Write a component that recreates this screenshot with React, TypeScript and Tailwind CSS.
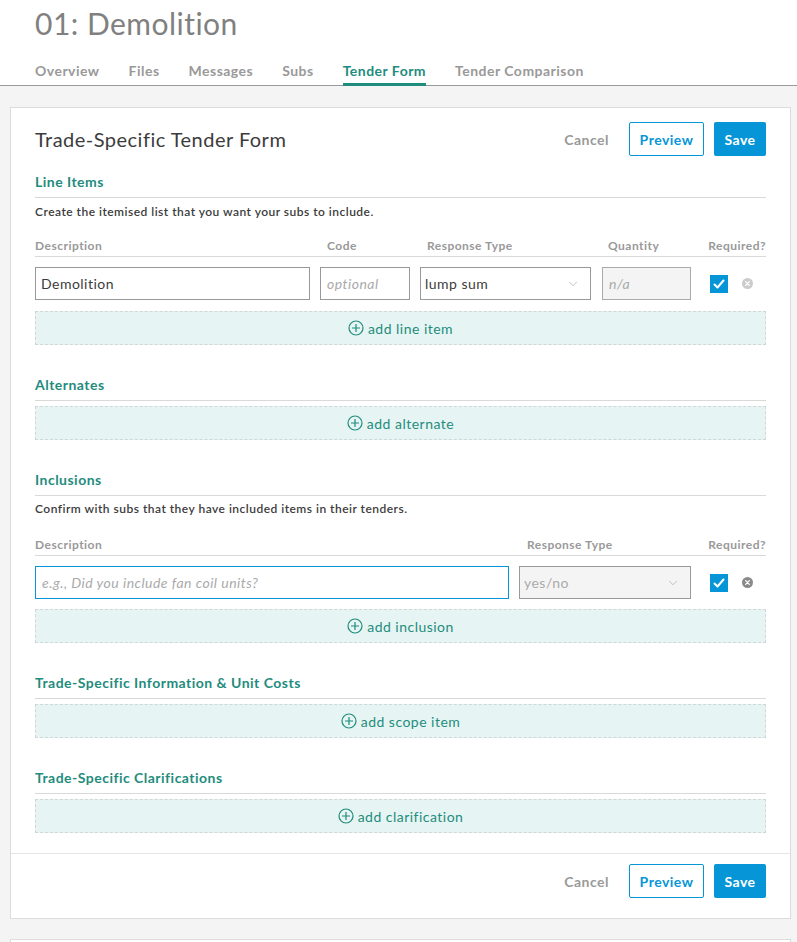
import { ChevronDown } from 'lucide-react'

const font = { fontFamily: 'Lato, "Noto Sans", sans-serif' }

function PlusCircle() {
  return (
    <svg width="16" height="16" viewBox="0 0 16 16" fill="none" stroke="currentColor" strokeWidth="1.2" aria-hidden="true">
      <circle cx="8" cy="8" r="7" />
      <path d="M8 4v8 M4 8h8" />
    </svg>
  )
}

function Checkbox() {
  return (
    <span className="flex h-[18px] w-[18px] items-center justify-center bg-[#0696d7]">
      <svg width="12" height="12" viewBox="0 0 12 12" fill="none" stroke="white" strokeWidth="2" strokeLinecap="round" strokeLinejoin="round" aria-hidden="true">
        <path d="M1.5 6.5l3 3 6-7" />
      </svg>
    </span>
  )
}

function RemoveIcon({ dark }: { dark?: boolean }) {
  return (
    <svg width="11" height="11" viewBox="0 0 12 12" aria-hidden="true">
      <circle cx="6" cy="6" r="6" fill={dark ? '#8a8a8a' : '#cccccc'} />
      <path d="M4 4l4 4 M8 4l-4 4" stroke="white" strokeWidth="1.4" strokeLinecap="round" />
    </svg>
  )
}

function AddButton({ label }: { label: string }) {
  return (
    <button className="flex h-[34px] w-full items-center justify-center gap-1 border border-dashed border-[#cfd8d6] bg-[#e6f5f3] text-[14px] text-[#1f8c7d]">
      <PlusCircle />
      <span>{label}</span>
    </button>
  )
}

function SectionHeading({ title }: { title: string }) {
  return (
    <h3 className="border-b border-[#d9d9d9] pb-[6px] text-[14px] font-bold leading-[18px] text-[#1f8c7d]">
      {title}
    </h3>
  )
}

function Actions() {
  return (
    <div className="flex items-center">
      <button className="mr-5 text-[14px] font-bold text-[#999]">Cancel</button>
      <button className="h-[34px] w-[75px] rounded-[2px] border border-[#0696d7] bg-white text-[14px] font-bold text-[#0696d7]">
        Preview
      </button>
      <button className="ml-[10px] h-[34px] w-[52px] rounded-[2px] bg-[#0696d7] text-[14px] font-bold text-white">
        Save
      </button>
    </div>
  )
}

const tabs = ['Overview', 'Files', 'Messages', 'Subs', 'Tender Form', 'Tender Comparison']

export default function App() {
  return (
    <div className="min-h-[942px] bg-[#f4f4f4] tracking-[0.03em] text-[#3c3c3c]" style={font}>
      <header className="border-b border-[#999] bg-white px-[35px]">
        <h1 className="pt-[5px] text-[30px] leading-[36px] text-[#808080]">01: Demolition</h1>
        <nav className="-mb-px mt-[20px] flex gap-[29px]">
          {tabs.map((t) => (
            <span
              key={t}
              className={[
                'pb-[2px] text-[14px] font-bold leading-[20px]',
                t === 'Tender Form' ? 'border-b-[3px] border-[#1f8c7d] text-[#1f8c7d]' : 'border-b-[3px] border-transparent text-[#999]',
              ].join(' ')}
            >
              {t}
            </span>
          ))}
        </nav>
      </header>

      <main className="pl-[10px] pr-[6px] pt-[21px]">
        <section className="border border-[#dcdcdc] bg-white">
          <div className="px-[24px] pt-[14px]">
            <div className="flex items-center justify-between">
              <h2 className="text-[20px] leading-[28px] text-[#3c3c3c]">Trade-Specific Tender Form</h2>
              <Actions />
            </div>

            <div className="mt-[17px]">
              <SectionHeading title="Line Items" />
              <p className="mt-[6px] text-[12px] font-semibold leading-[16px] text-[#3c3c3c]">
                Create the itemised list that you want your subs to include.
              </p>
              <div className="mt-[18px] grid grid-cols-[275px_90px_171px_90px_1fr] gap-x-[10px] border-b border-[#d9d9d9] pb-[2px] text-[12px] font-bold leading-[16px] text-[#999]">
                <span>Description</span>
                <span className="pl-[7px]">Code</span>
                <span className="pl-[7px]">Response Type</span>
                <span className="pl-[7px]">Quantity</span>
                <span className="text-right">Required?</span>
              </div>
              <div className="mt-[10px] grid grid-cols-[275px_90px_171px_90px_1fr] items-center gap-x-[10px]">
                <div className="flex h-[33px] items-center border border-[#999] px-[5px] text-[14px]">Demolition</div>
                <div className="flex h-[33px] items-center border border-[#999] px-[6px] text-[14px] italic text-[#aaa]">optional</div>
                <div className="flex h-[33px] items-center justify-between border border-[#999] pl-[4px] pr-[10px] text-[14px]">
                  <span>lump sum</span>
                  <ChevronDown size={14} strokeWidth={1} color="#999" />
                </div>
                <div className="ml-[1px] flex h-[33px] items-center border border-[#aaa] bg-[#f4f4f4] px-[6px] text-[14px] italic text-[#aaa]">n/a</div>
                <div className="flex items-center gap-[14px] pl-[9px]">
                  <Checkbox />
                  <RemoveIcon />
                </div>
              </div>
              <div className="mt-[11px]">
                <AddButton label="add line item" />
              </div>
            </div>

            <div className="mt-[31px]">
              <SectionHeading title="Alternates" />
              <div className="mt-[5px]">
                <AddButton label="add alternate" />
              </div>
            </div>

            <div className="mt-[31px]">
              <SectionHeading title="Inclusions" />
              <p className="mt-[5px] text-[12px] font-semibold leading-[16px] text-[#3c3c3c]">
                Confirm with subs that they have included items in their tenders.
              </p>
              <div className="mt-[20px] grid grid-cols-[474px_172px_1fr] gap-x-[10px] border-b border-[#d9d9d9] pb-[2px] text-[12px] font-bold leading-[16px] text-[#999]">
                <span>Description</span>
                <span className="pl-[8px]">Response Type</span>
                <span className="text-right">Required?</span>
              </div>
              <div className="mt-[10px] grid grid-cols-[474px_172px_1fr] items-center gap-x-[10px]">
                <div className="flex h-[33px] items-center border border-[#0696d7] px-[6px] text-[14px] italic text-[#aaa]">
                  e.g., Did you include fan coil units?
                </div>
                <div className="flex h-[33px] items-center justify-between border border-[#999] bg-[#f4f4f4] pl-[4px] pr-[10px] text-[14px] text-[#aaa]">
                  <span>yes/no</span>
                  <ChevronDown size={14} strokeWidth={1} color="#999" />
                </div>
                <div className="flex items-center gap-[14px] pl-[9px]">
                  <Checkbox />
                  <RemoveIcon dark />
                </div>
              </div>
              <div className="mt-[10px]">
                <AddButton label="add inclusion" />
              </div>
            </div>

            <div className="mt-[31px]">
              <SectionHeading title="Trade-Specific Information & Unit Costs" />
              <div className="mt-[5px]">
                <AddButton label="add scope item" />
              </div>
            </div>

            <div className="mt-[31px]">
              <SectionHeading title="Trade-Specific Clarifications" />
              <div className="mt-[5px]">
                <AddButton label="add clarification" />
              </div>
            </div>
          </div>

          <div className="mt-[20px] flex justify-end border-t border-[#e5e5e5] px-[24px] pb-[20px] pt-[10px]">
            <Actions />
          </div>
        </section>
        <div className="mt-[20px] h-[10px] border border-b-0 border-[#dcdcdc] bg-white" />
      </main>
    </div>
  )
}
